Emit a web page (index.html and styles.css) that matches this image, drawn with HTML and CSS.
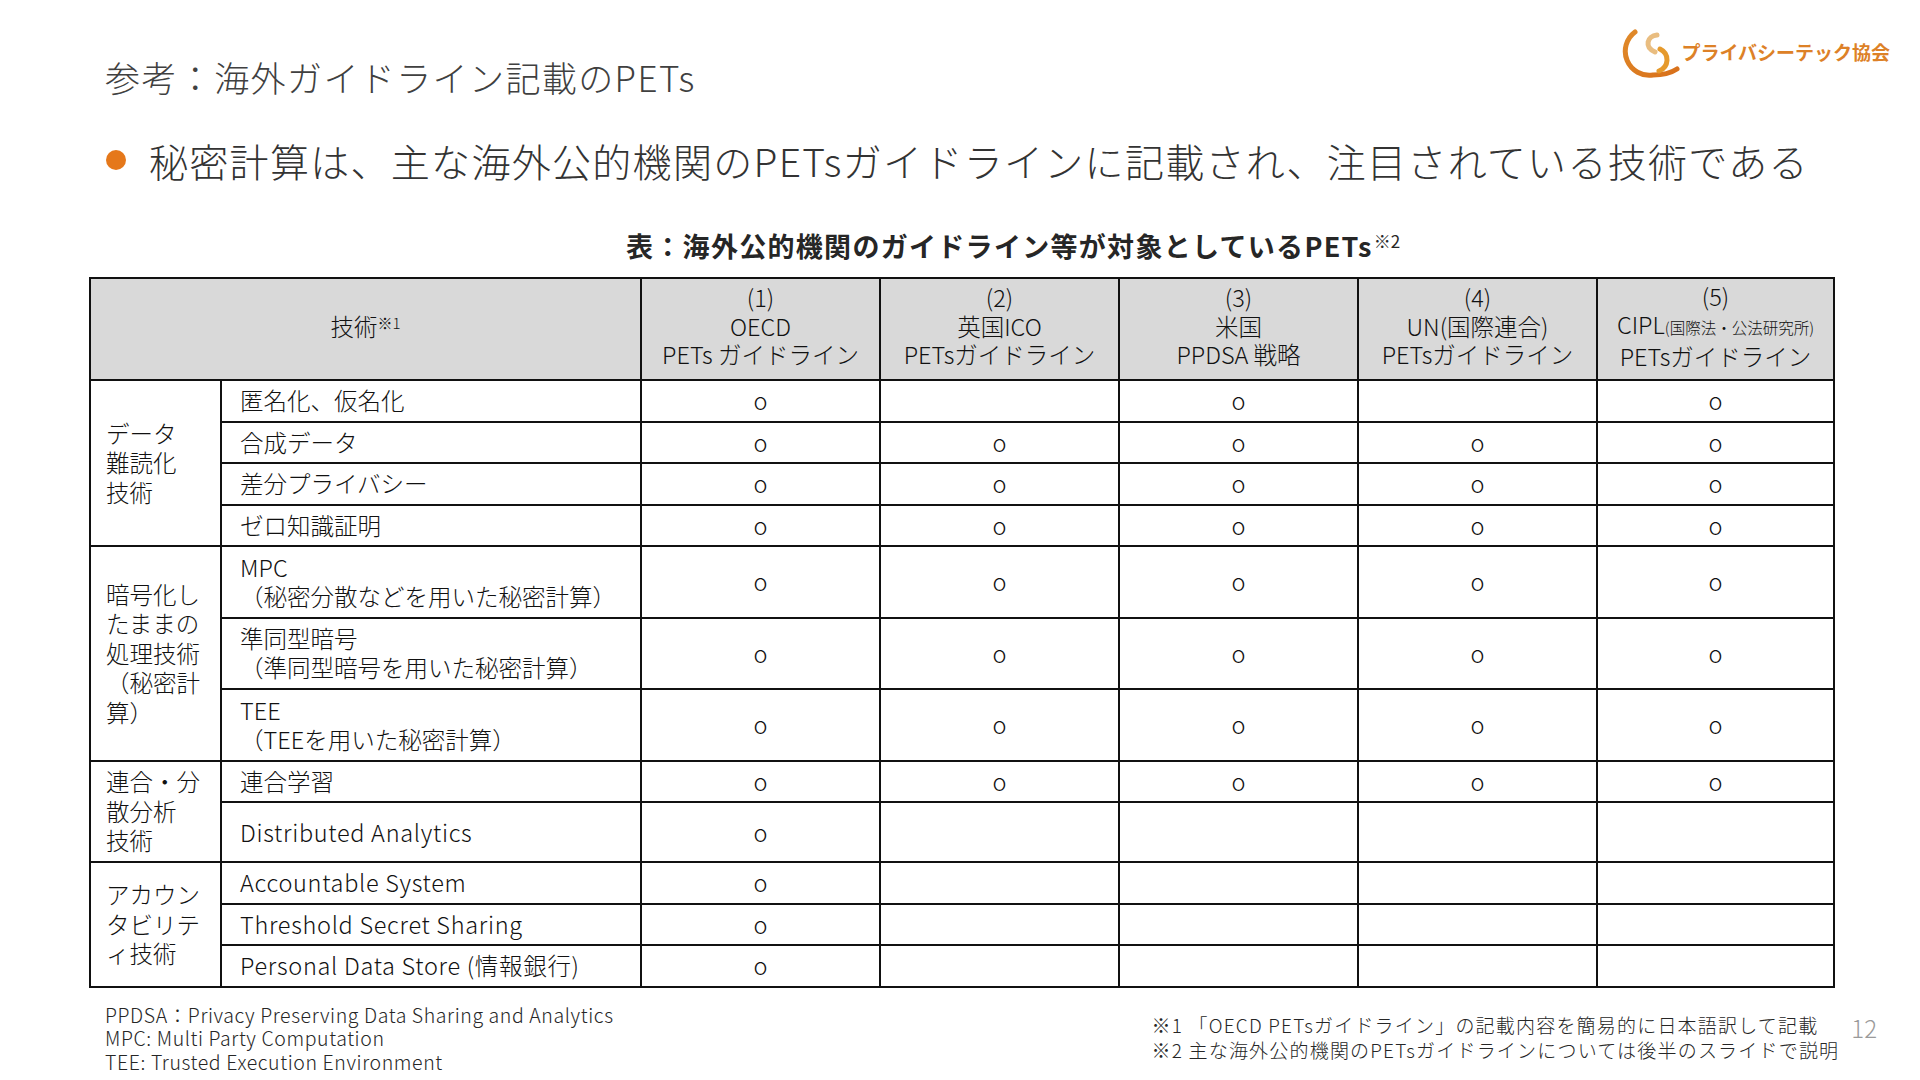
FILE: index.html
```html
<!DOCTYPE html>
<html lang="ja">
<head>
<meta charset="utf-8">
<title>参考：海外ガイドライン記載のPETs</title>
<link rel="stylesheet" href="styles.css">
</head>
<body>
<div class="slide">
  <header class="top">
    <h1 class="title">参考：海外ガイドライン記載のPETs</h1>
    <div class="logo">
      <svg class="logo-mark" width="60" height="60" viewBox="0 0 60 60">
        <defs>
          <linearGradient id="g1" x1="0" y1="0" x2="1" y2="1">
            <stop offset="0" stop-color="#e08a2a"/>
            <stop offset="1" stop-color="#d8701a"/>
          </linearGradient>
        </defs>
        <path d="M15 7 A24 24 0 0 0 33 50 Q48 50 57 44" fill="none" stroke="url(#g1)" stroke-width="5" stroke-linecap="round"/>
        <path d="M37 10 C27 11 24 22 35 27" fill="none" stroke="#e9bd80" stroke-width="5" stroke-linecap="round"/>
        <path d="M40 24 C50 29 49 42 39 46" fill="none" stroke="#e69a2c" stroke-width="5" stroke-linecap="round"/>
      </svg>
      <span class="logo-text">プライバシーテック協会</span>
    </div>
  </header>

  <p class="lead"><span class="dot"></span>秘密計算は、主な海外公的機関のPETsガイドラインに記載され、注目されている技術である</p>

  <div class="caption">表：海外公的機関のガイドライン等が対象としているPETs<sup class="cap-sup">※2</sup></div>

  <table class="pets">
    <colgroup>
      <col class="c-group"><col class="c-tech"><col class="c-g"><col class="c-g"><col class="c-g"><col class="c-g"><col class="c-last">
    </colgroup>
    <thead>
      <tr class="h">
        <th colspan="2">技術<sup class="hsup">※1</sup></th>
        <th>(1)<br>OECD<br>PETs ガイドライン</th>
        <th>(2)<br>英国ICO<br>PETsガイドライン</th>
        <th>(3)<br>米国<br>PPDSA 戦略</th>
        <th>(4)<br>UN(国際連合)<br>PETsガイドライン</th>
        <th>(5)<br>CIPL<span class="small">(国際法・公法研究所)</span><br>PETsガイドライン</th>
      </tr>
    </thead>
    <tbody>
      <tr class="r1">
        <td class="grp" rowspan="4">データ<br>難読化<br>技術</td>
        <td class="tech">匿名化、仮名化</td>
        <td class="m">o</td><td class="m"></td><td class="m">o</td><td class="m"></td><td class="m">o</td>
      </tr>
      <tr class="r1">
        <td class="tech">合成データ</td>
        <td class="m">o</td><td class="m">o</td><td class="m">o</td><td class="m">o</td><td class="m">o</td>
      </tr>
      <tr class="r1">
        <td class="tech">差分プライバシー</td>
        <td class="m">o</td><td class="m">o</td><td class="m">o</td><td class="m">o</td><td class="m">o</td>
      </tr>
      <tr class="r1">
        <td class="tech">ゼロ知識証明</td>
        <td class="m">o</td><td class="m">o</td><td class="m">o</td><td class="m">o</td><td class="m">o</td>
      </tr>
      <tr class="r2">
        <td class="grp" rowspan="3">暗号化し<br>たままの<br>処理技術<br>（秘密計<br>算）</td>
        <td class="tech">MPC<br>（秘密分散などを用いた秘密計算）</td>
        <td class="m">o</td><td class="m">o</td><td class="m">o</td><td class="m">o</td><td class="m">o</td>
      </tr>
      <tr class="r2">
        <td class="tech">準同型暗号<br>（準同型暗号を用いた秘密計算）</td>
        <td class="m">o</td><td class="m">o</td><td class="m">o</td><td class="m">o</td><td class="m">o</td>
      </tr>
      <tr class="r2">
        <td class="tech">TEE<br>（TEEを用いた秘密計算）</td>
        <td class="m">o</td><td class="m">o</td><td class="m">o</td><td class="m">o</td><td class="m">o</td>
      </tr>
      <tr class="r1">
        <td class="grp" rowspan="2">連合・分<br>散分析<br>技術</td>
        <td class="tech">連合学習</td>
        <td class="m">o</td><td class="m">o</td><td class="m">o</td><td class="m">o</td><td class="m">o</td>
      </tr>
      <tr class="r3">
        <td class="tech lat">Distributed Analytics</td>
        <td class="m">o</td><td class="m"></td><td class="m"></td><td class="m"></td><td class="m"></td>
      </tr>
      <tr class="r1">
        <td class="grp" rowspan="3">アカウン<br>タビリテ<br>ィ技術</td>
        <td class="tech lat">Accountable System</td>
        <td class="m">o</td><td class="m"></td><td class="m"></td><td class="m"></td><td class="m"></td>
      </tr>
      <tr class="r1">
        <td class="tech lat">Threshold Secret Sharing</td>
        <td class="m">o</td><td class="m"></td><td class="m"></td><td class="m"></td><td class="m"></td>
      </tr>
      <tr class="r1">
        <td class="tech lat">Personal Data Store (情報銀行)</td>
        <td class="m">o</td><td class="m"></td><td class="m"></td><td class="m"></td><td class="m"></td>
      </tr>
    </tbody>
  </table>

  <footer class="notes">
    <div class="abbr">
      <div>PPDSA：Privacy Preserving Data Sharing and Analytics</div>
      <div>MPC: Multi Party Computation</div>
      <div>TEE: Trusted Execution Environment</div>
    </div>
    <div class="remarks">
      <div>※1 「OECD PETsガイドライン」の記載内容を簡易的に日本語訳して記載</div>
      <div>※2 主な海外公的機関のPETsガイドラインについては後半のスライドで説明</div>
    </div>
    <div class="page">12</div>
  </footer>
</div>
</body>
</html>
```

FILE: styles.css
```css
* { box-sizing: border-box; }

html, body {
  margin: 0;
  padding: 0;
  background: #ffffff;
}

body {
  width: 1920px;
  height: 1080px;
  overflow: hidden;
  font-family: "Noto Sans CJK JP", "Noto Sans", sans-serif;
  color: #262626;
}

.slide {
  width: 1920px;
  height: 1080px;
  padding: 25px 43px 0 89px;
  display: flex;
  flex-direction: column;
}

.top {
  display: flex;
  justify-content: space-between;
  align-items: flex-start;
}

.title {
  margin: 30px 0 0 16px;
  font-size: 35px;
  line-height: 43px;
  font-weight: 300;
  color: #404040;
  letter-spacing: 1.4px;
}

.logo {
  display: flex;
  align-items: center;
  margin-right: -13px;
}

.logo-mark {
  display: block;
  margin-right: 1px;
}

.logo-text {
  font-size: 19px;
  font-weight: 700;
  color: #dd8127;
  margin-top: -8px;
}

.lead {
  margin: 38px 0 0 17px;
  display: flex;
  align-items: center;
  font-size: 39px;
  line-height: 48px;
  font-weight: 300;
  color: #333333;
  letter-spacing: 1.3px;
}

.dot {
  width: 20px;
  height: 20px;
  border-radius: 50%;
  background: #e5781a;
  margin-right: 23px;
  flex: none;
}

.caption {
  margin: 46px 0 0 537px;
  font-size: 27px;
  line-height: 32px;
  font-weight: 700;
  color: #262626;
  letter-spacing: 1.3px;
}

.cap-sup {
  font-size: 17px;
  font-weight: 400;
  vertical-align: 9px;
  line-height: 0;
  margin-left: 1px;
  letter-spacing: 0;
}

.pets {
  margin-top: 15px;
  width: 1744px;
  border-collapse: collapse;
  table-layout: fixed;
  font-size: 23.5px;
  line-height: 29px;
  font-weight: 300;
  color: #111111;
  border: 2.5px solid #111;
}

.c-group { width: 131px; }
.c-tech { width: 420px; }
.c-g { width: 239px; }
.c-last { width: 237px; }

.pets th,
.pets td {
  border: 2px solid #111;
  padding: 0;
}

.pets th {
  background: #d9d9d9;
  font-weight: 300;
  text-align: center;
  vertical-align: middle;
  line-height: 28.5px;
  padding-bottom: 6px;
}

.h { height: 102px; }
.r1 { height: 41.5px; }
.r2 { height: 71.5px; }
.r3 { height: 60px; }

.hsup {
  font-size: 15px;
  vertical-align: 7px;
  line-height: 0;
}

.small {
  font-size: 15.5px;
}

.grp {
  padding: 0 6px 0 15px !important;
  vertical-align: middle;
  line-height: 29.5px;
}

.tech {
  padding: 0 10px 0 18px !important;
  vertical-align: middle;
}

.lat {
  letter-spacing: 0.7px;
}

.m {
  text-align: center;
  vertical-align: middle;
}

.notes {
  display: flex;
  align-items: flex-start;
  margin-top: 15px;
  color: #262626;
  font-weight: 300;
}

.abbr {
  padding-left: 16px;
  font-size: 19.5px;
  line-height: 23.5px;
  letter-spacing: 0.6px;
  flex: 1;
}

.remarks {
  padding-top: 9px;
  font-size: 19px;
  line-height: 25px;
  letter-spacing: 1.2px;
}

.page {
  margin-left: 12px;
  padding-top: 10px;
  font-size: 24px;
  line-height: 30px;
  color: #9a9a9a;
}
```
